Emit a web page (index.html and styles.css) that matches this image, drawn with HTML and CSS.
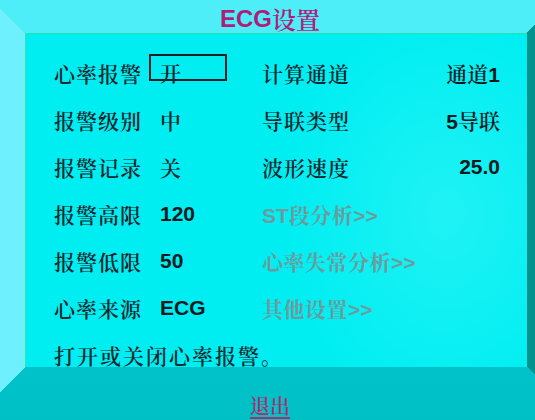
FILE: index.html
```html
<!DOCTYPE html>
<html>
<head>
<meta charset="utf-8">
<link rel="stylesheet" href="styles.css">
</head>
<body>
<div class="screen">
  <header class="title"><span class="lat">ECG</span>设置</header>
  <main class="panel">
    <div class="grid">
      <div class="lbl">心率报警</div>
      <div class="val"><span class="box">开</span></div>
      <div class="lbl r">计算通道</div>
      <div class="num right">通道<span class="lat">1</span></div>

      <div class="lbl">报警级别</div>
      <div class="val">中</div>
      <div class="lbl r">导联类型</div>
      <div class="num right"><span class="lat">5</span>导联</div>

      <div class="lbl">报警记录</div>
      <div class="val">关</div>
      <div class="lbl r">波形速度</div>
      <div class="num right lat">25.0</div>

      <div class="lbl">报警高限</div>
      <div class="val num lat">120</div>
      <div class="link r"><span class="lat">ST</span>段分析<span class="lat">&gt;&gt;</span></div>
      <div></div>

      <div class="lbl">报警低限</div>
      <div class="val num lat">50</div>
      <div class="link r">心率失常分析<span class="lat">&gt;&gt;</span></div>
      <div></div>

      <div class="lbl">心率来源</div>
      <div class="val num lat">ECG</div>
      <div class="link r">其他设置<span class="lat">&gt;&gt;</span></div>
      <div></div>
    </div>
    <div class="hint">打开或关闭心率报警。</div>
  </main>
  <footer class="foot"><span class="exit">退出</span></footer>
</div>
</body>
</html>
```
FILE: styles.css
```css
* { box-sizing: border-box; }
html, body { margin: 0; padding: 0; }
body {
  width: 535px;
  height: 420px;
  overflow: hidden;
  font-family: "Noto Serif CJK SC", "Noto Sans CJK SC", sans-serif;
}
.screen {
  width: 535px;
  height: 420px;
  display: flex;
  flex-direction: column;
  background-color: #4eeef8;
  background-image:
    linear-gradient(to top right, #6ef0ff 50%, transparent 50%),
    linear-gradient(#6ef0ff, #6ef0ff),
    linear-gradient(to bottom right, #6ef0ff 50%, transparent 50%),
    linear-gradient(to bottom right, transparent 50%, #02928e 50%),
    linear-gradient(#02928e, #02928e),
    linear-gradient(to bottom left, #02928e 50%, transparent 50%),
    linear-gradient(#00c2c8, #00c0c6);
  background-repeat: no-repeat;
  background-size:
    25px 25px,
    25px 334px,
    25px 25px,
    8px 8px,
    8px 334px,
    8px 8px,
    535px 53px;
  background-position:
    0 8px,
    0 33px,
    0 367px,
    527px 25px,
    527px 33px,
    527px 367px,
    0 367px;
}
.lat { font-family: "Liberation Sans", Arial, sans-serif; font-weight: bold; }
.title {
  height: 33px;
  display: flex;
  align-items: center;
  justify-content: center;
  padding-left: 5px;
  padding-top: 4px;
  font-size: 24px;
  font-weight: 600;
  color: #b01c78;
  line-height: 1;
}
.panel {
  height: 334px;
  margin: 0 8px 0 25px;
  background: radial-gradient(ellipse 160px 200px at 420px 180px, #20f2f4 0%, #00eef2 100%), #00eef2;
  border-top: 1px solid #28e2a8;
  border-left: 1px solid #30e6b0;
  padding: 15px 27px 0 28px;
  color: #12262c;
}
.grid {
  display: grid;
  grid-template-columns: 95px 113px 1fr auto;
  grid-auto-rows: 47px;
  align-items: center;
  font-size: 21px;
  font-weight: 600;
  letter-spacing: 1px;
}
.lbl { white-space: nowrap; }
.val { padding-left: 11px; white-space: nowrap; }
.box {
  display: inline-block;
  width: 78px;
  height: 27px;
  border: 2px solid #0e2024;
  padding-left: 9px;
  padding-top: 3px;
  margin-left: -11px;
  line-height: 26px;
  vertical-align: top;
  position: relative;
  top: -4px;
}
.num { color: #0a1a1e; letter-spacing: 0; }
.num.lat { font-size: 21px; }
.right { text-align: right; letter-spacing: 0; }
.link { color: #6a9c9e; font-weight: bold; white-space: nowrap; letter-spacing: 0.5px; }
.link .lat { font-weight: bold; letter-spacing: 0; }
.hint {
  height: 47px;
  display: flex;
  align-items: center;
  font-size: 21px;
  font-weight: 600;
  letter-spacing: 2px;
}
.foot {
  flex: 1;
  display: flex;
  align-items: center;
  justify-content: center;
  padding-left: 5px;
  padding-top: 24px;
}
.exit {
  font-size: 20px;
  font-weight: 600;
  color: #b02c6e;
  text-decoration: underline;
  text-underline-offset: 3px;
  line-height: 1;
}
```
